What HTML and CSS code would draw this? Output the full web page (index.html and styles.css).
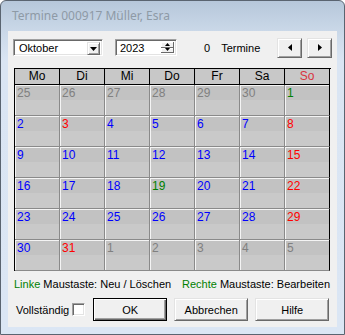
FILE: index.html
```html
<!DOCTYPE html>
<html lang="de">
<head>
    <meta charset="UTF-8">
    <link rel="stylesheet" href="styles.css">
    <title>Termine</title>
</head>
<body>
<div class="window">
    <div class="titlebar">Termine 000917 Müller, Esra</div>
    <div class="client">
        <div class="toolbar">
            <div class="combo">
                <span class="combo-text">Oktober</span>
                <span class="combo-btn"><svg width="7" height="4" viewBox="0 0 7 4"><path d="M0 0h7L3.5 4z" fill="#000"/></svg></span>
            </div>
            <div class="spin">
                <span class="spin-text">2023</span>
                <span class="spin-btns">
                    <span class="spin-b"><svg width="5" height="3" viewBox="0 0 5 3"><path d="M0 3h5L2.5 0z" fill="#000"/></svg></span>
                    <span class="spin-b"><svg width="5" height="3" viewBox="0 0 5 3"><path d="M0 0h5L2.5 3z" fill="#000"/></svg></span>
                </span>
            </div>
            <span class="count">0</span>
            <span class="count-label">Termine</span>
            <div class="nav prev"><svg width="4" height="7" viewBox="0 0 4 7"><path d="M4 0v7L0 3.5z" fill="#000"/></svg></div>
            <div class="nav next"><svg width="4" height="7" viewBox="0 0 4 7"><path d="M0 0v7L4 3.5z" fill="#000"/></svg></div>
        </div>

        <div class="cal">
            <div class="head">Mo</div>
            <div class="head">Di</div>
            <div class="head">Mi</div>
            <div class="head">Do</div>
            <div class="head">Fr</div>
            <div class="head">Sa</div>
            <div class="head sun">So</div>

            <div class="day other">25</div>
            <div class="day other">26</div>
            <div class="day other">27</div>
            <div class="day other">28</div>
            <div class="day other">29</div>
            <div class="day other">30</div>
            <div class="day today">1</div>

            <div class="day">2</div>
            <div class="day holiday">3</div>
            <div class="day">4</div>
            <div class="day">5</div>
            <div class="day">6</div>
            <div class="day">7</div>
            <div class="day holiday">8</div>

            <div class="day">9</div>
            <div class="day">10</div>
            <div class="day">11</div>
            <div class="day">12</div>
            <div class="day">13</div>
            <div class="day">14</div>
            <div class="day holiday">15</div>

            <div class="day">16</div>
            <div class="day">17</div>
            <div class="day">18</div>
            <div class="day today">19</div>
            <div class="day">20</div>
            <div class="day">21</div>
            <div class="day holiday">22</div>

            <div class="day">23</div>
            <div class="day">24</div>
            <div class="day">25</div>
            <div class="day">26</div>
            <div class="day">27</div>
            <div class="day">28</div>
            <div class="day holiday">29</div>

            <div class="day">30</div>
            <div class="day holiday">31</div>
            <div class="day other">1</div>
            <div class="day other">2</div>
            <div class="day other">3</div>
            <div class="day other">4</div>
            <div class="day other">5</div>
        </div>

        <div class="hint">
            <span><span class="green">Linke</span> Maustaste: Neu / Löschen</span>
            <span><span class="green">Rechte</span> Maustaste: Bearbeiten</span>
        </div>

        <div class="footer">
            <span class="check-label">Vollständig</span>
            <span class="checkbox"></span>
            <div class="btn default">OK</div>
            <div class="btn">Abbrechen</div>
            <div class="btn">Hilfe</div>
        </div>
    </div>
</div>
</body>
</html>
```

FILE: styles.css
```css
body {
    margin: 0;
    font-family: "Liberation Sans", Arial, sans-serif;
    font-size: 11px;
    background: #fff;
}

.window {
    width: 345px;
    height: 335px;
    box-sizing: border-box;
    border: 1px solid #5a6470;
    border-radius: 6px 6px 0 0;
    background: linear-gradient(#b6c7da 0, #cad8e8 30px, #dae5f3 60px, #dbe6f4 100%);
}

.titlebar {
    height: 30px;
    padding-left: 11px;
    line-height: 29px;
    font-family: "Noto Sans", sans-serif;
    font-size: 12px;
    color: #8e9aa6;
}

.client {
    margin: 0 7px;
    height: 296px;
    background: #f0f0f0;
}

/* top controls */
.toolbar {
    display: flex;
    align-items: center;
    height: 21px;
    padding: 6px 0 0 5px;
}

.combo, .spin, .checkbox {
    box-sizing: border-box;
    background: #fff;
    border-top: 1px solid #a0a0a0;
    border-left: 1px solid #a0a0a0;
    border-right: 1px solid #fff;
    border-bottom: 1px solid #fff;
    box-shadow: inset 1px 1px 0 #696969, inset -1px -1px 0 #e3e3e3;
}

.combo {
    display: flex;
    width: 90px;
    height: 17px;
    padding: 2px;
}

.combo-text {
    flex: 1;
    line-height: 13px;
    padding-left: 3px;
}

.combo-btn, .spin-b, .nav, .btn {
    box-sizing: border-box;
    background: #f0f0f0;
    display: flex;
    align-items: center;
    justify-content: center;
    border-top: 1px solid #e3e3e3;
    border-left: 1px solid #e3e3e3;
    border-right: 1px solid #696969;
    border-bottom: 1px solid #696969;
    box-shadow: inset 1px 1px 0 #fff, inset -1px -1px 0 #a0a0a0;
}

.combo-btn {
    width: 13px;
    height: 13px;
}

.spin {
    display: flex;
    width: 62px;
    height: 17px;
    margin-left: 12px;
    padding: 2px;
}

.spin-text {
    flex: 1;
    line-height: 13px;
    padding-left: 2px;
}

.spin-btns {
    display: flex;
    flex-direction: column;
    width: 13px;
}

.spin-b {
    height: 6.5px;
    border-width: 0 1px 1px 0;
    box-shadow: inset 1px 1px 0 #fff;
}

.count {
    margin-left: 27px;
}

.count-label {
    margin-left: 11px;
}

.nav {
    width: 25px;
    height: 20px;
}

.prev {
    margin-left: 17px;
}

.next {
    margin-left: 5px;
}

/* calendar */
.cal {
    display: grid;
    grid-template-columns: repeat(7, 45px);
    grid-template-rows: 16px repeat(6, 31px);
    width: 316px;
    margin: 10px 0 0 6px;
    border-top: 1px solid #000;
    border-left: 1px solid #000;
    font-size: 12px;
}

.head {
    background: #c8c8c8;
    border-right: 1px solid #000;
    border-bottom: 1px solid #000;
    text-align: center;
    line-height: 15px;
    color: #000;
}

.head.sun {
    color: #d8343f;
}

.day {
    border-right: 1px solid #8a8a8a;
    border-bottom: 1px solid #8a8a8a;
    box-shadow: inset 1px 1px 0 #f4f4f4;
    background: linear-gradient(#c2c2c2 0, #c2c2c2 15px, #c9c9c9 15px);
    color: #0000ff;
    padding: 2px 0 0 2px;
    line-height: 13px;
}

.day:nth-child(7n) {
    border-right-color: #000;
}

.day.other {
    color: #808080;
}

.day.holiday {
    color: #ff0000;
}

.day.today {
    color: #008000;
}

/* bottom part */
.hint {
    display: flex;
    justify-content: space-between;
    padding: 7px 7px 0 6px;
    line-height: 13px;
}

.green {
    color: #008000;
}

.footer {
    display: flex;
    align-items: center;
    padding: 7px 0 0 8px;
}

.checkbox {
    width: 13px;
    height: 13px;
    margin-left: 3px;
}

.btn {
    width: 74px;
    height: 23px;
    margin-left: 7px;
}

.btn.default {
    margin-left: 8px;
    border: 1px solid #000;
    box-shadow: inset 1px 1px 0 #fff, inset -1px -1px 0 #696969, inset -2px -2px 0 #a0a0a0;
}
```
